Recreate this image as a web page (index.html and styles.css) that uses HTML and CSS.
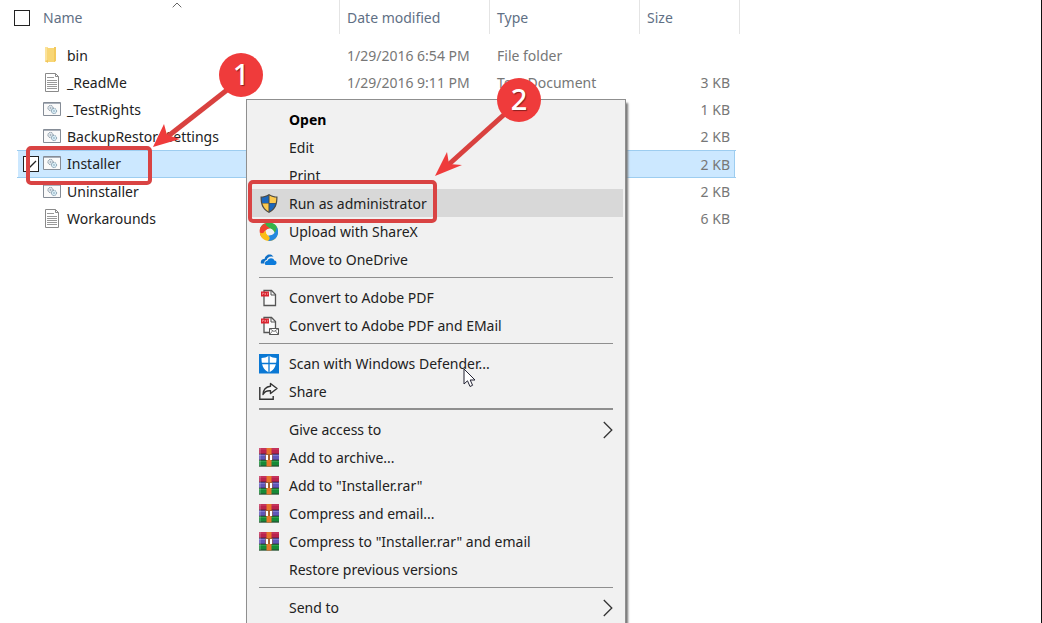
FILE: index.html
```html
<!DOCTYPE html>
<html lang="en">
<head>
<meta charset="utf-8">
<title>File Explorer</title>
<link rel="stylesheet" href="styles.css">
</head>
<body>
<svg class="defs" aria-hidden="true">
  <symbol id="i-folder" viewBox="0 0 18 20"><path d="M2 1h3v15H2z" fill="#fbe29a"/><path d="M4 2h8v14H4z" fill="#f8d675"/><path d="M11 1h2v14l-2 1z" fill="#f3c95c"/><path d="M2 15l3 2v-3z" fill="#f0c55a"/></symbol>
  <symbol id="i-text" viewBox="0 0 18 20"><path d="M2.500.5h10l3 3v15h-13z" fill="#fff" stroke="#8a8a8a"/><path d="M12.500.5v3h3" fill="none" stroke="#8a8a8a"/><path d="M4 4.500h7M4 7.500h10M4 9.500h10M4 11.500h10M4 13.500h10M4 15.500h10" stroke="#999"/></symbol>
  <symbol id="i-bat" viewBox="0 0 18 20"><path d="M.5 2.500h17v13H.5z" fill="#fafafa" stroke="#858c96"/><path d="M1 3.500h16" stroke="#a9b0ba"/><circle cx="7.500" cy="8" r="2.600" fill="#dfe8ef" stroke="#7f8d99" stroke-dasharray="1.400 .7"/><circle cx="11" cy="11" r="2.600" fill="#d9ecf5" stroke="#7d98aa" stroke-dasharray="1.400 .7"/><circle cx="7.500" cy="8" r=".8" fill="#8e9ba6"/><circle cx="11" cy="11" r=".8" fill="#7fa4b8"/></symbol>
  <symbol id="i-uac" viewBox="0 0 20 20"><path d="M10 0C7 2 4 2.500 1.500 2.500c0 8 1.500 13 8.500 16.500 7-3.500 8.500-8.500 8.500-16.500C16 2.500 13 2 10 0z" fill="#4d4a42"/><path d="M9.500 1.500C7 2.900 5 3.500 2.700 3.600c0 2.100.2 4 .6 5.400h6.200z" fill="#1b67bd"/><path d="M10.500 1.500c2.500 1.400 4.500 2 6.800 2.100 0 2.100-.2 4-.6 5.400h-6.200z" fill="#fcc94e"/><path d="M3.400 9.500h6.100v8c-3-1.700-5.100-4.400-6.100-8z" fill="#fcc94e"/><path d="M16.600 9.500h-6.100v8c3-1.700 5.100-4.400 6.100-8z" fill="#1b67bd"/></symbol>
  <symbol id="i-sharex" viewBox="0 0 20 20"><path d="M1 7C2 2 7 0 11 .5c5 .5 8 4 8 9 0 3-1 5-3 6.500.5-4-.5-8-4.500-9.500C8 5 4 5 1 7z" fill="#37b34a"/><path d="M7 1.500C3 2 0 6 .8 10.500 1 13 2 15 4 16c0-5 2-9 7.500-9.500C8 4 6 3.500 7 1.500z" fill="#f0412f"/><path d="M1 10.500C1 15 5 19 10 19c3.500 0 6-1.500 7.500-4-5 1.500-9.500 0-11-6.500C5 11 3 12 1 10.500z" fill="#fbbd16"/><path d="M9 19c6 .5 10.500-4 10-10-.2-1.500-.7-3-1.500-4-.2 5-3 8.500-8.500 8.500 2 1.500 2.500 3.500 0 5.500z" fill="#2588e0"/><circle cx="10.500" cy="10" r="3.300" fill="#f1f1f1"/></symbol>
  <symbol id="i-cloud" viewBox="0 0 20 20"><path d="M2 13.500C1 10 4 8.500 5.500 9 6.500 4 12.500 3 14.500 7c-4-1.500-6.500 1-6.800 3-2 .3-2.700 2-2.200 3.500z" fill="#0f6fc6"/><path d="M6.500 15c-1.500-2 0-4 1.800-4C9 7.500 14.500 7 15.300 10.600c2.700 0 3 3.700.7 4.400z" fill="#0c7bdb"/></symbol>
  <symbol id="i-pdf" viewBox="0 0 20 20"><path d="M5 2.500h7.500l4 4v11H5z" fill="#fafafa" stroke="#555" stroke-width="1.300"/><path d="M12 2.500v4.500h4.500" fill="none" stroke="#555"/><path d="M2 3.500h8v5H2z" fill="#d9232e"/><path d="M3.500 7V5h1v1M6 7V5l1 1-1 1M8.500 7V5h1" fill="none" stroke="#f4a1a5" stroke-width=".6"/></symbol>
  <symbol id="i-pdfmail" viewBox="0 0 20 20"><path d="M5 1.500h7.500l4 4v11H5z" fill="#fafafa" stroke="#555" stroke-width="1.300"/><path d="M12 1.500V6h4.500" fill="none" stroke="#555"/><path d="M2 2.500h8v5H2z" fill="#d9232e"/><path d="M3.500 6V4h1v1M6 6V4l1 1-1 1M8.500 6V4h1" fill="none" stroke="#f4a1a5" stroke-width=".6"/><path d="M10.500 12.500h9v6h-9z" fill="#fff" stroke="#555"/><path d="M10.500 12.500l4.500 3 4.500-3M10.500 18.500l3-3.500M19.500 18.500l-3-3.500" fill="none" stroke="#555" stroke-width=".8"/></symbol>
  <symbol id="i-defender" viewBox="0 0 20 20"><path d="M0 0h20v19.500H0z" fill="#0a78d4"/><path d="M10 1.500C7.500 3.300 5 4 2.500 4c0 7 1.500 11.500 7.500 14.500C16 15.500 17.500 11 17.500 4 15 4 12.500 3.300 10 1.500z" fill="#fff"/><path d="M10 1v18M2 9.500h16" stroke="#0a78d4" stroke-width="1.300"/></symbol>
  <symbol id="i-share" viewBox="0 0 20 20"><path d="M.8 5v12.200h13.400V14" fill="none" stroke="#333" stroke-width="1.400"/><path d="M11.500 1.500l6.500 5-6.500 5V8.800C8 8.500 5.500 9.500 4 12.500c0-4.500 3-8 7.500-8.300z" fill="#f8f8f8" stroke="#333" stroke-width="1.400" stroke-linejoin="round"/></symbol>
  <symbol id="i-rar" viewBox="0 0 20 20"><path d="M0 0h20v6H0z" fill="#b9234e"/><path d="M0 6h20v6H0z" fill="#5f56b8"/><path d="M0 12h20v6.500H0z" fill="#168a37"/><path d="M0 1h20" stroke="#cf4468"/><path d="M0 7.500h20" stroke="#7f78d0"/><path d="M0 13.500h20" stroke="#2fa24b"/><path d="M0 6h20M0 12h20M0 18h20" stroke="#35202e" stroke-width=".7"/><path d="M1 0v18" stroke="#fff" stroke-opacity=".35"/><path d="M7.500 0h5v18.500h-5z" fill="#e8772b"/><path d="M6.500 6h7v6h-7z" fill="#a7602e"/><path d="M7 7h2v5H7zM11 7h2v5h-2z" fill="#fff"/></symbol>
  <symbol id="i-chevron" viewBox="0 0 10 18"><path d="M.8 1l8 8-8 8" fill="none" stroke="#333" stroke-width="1.300"/></symbol>
</svg>

<main class="explorer">
  <table class="files">
    <colgroup><col class="col-name"><col class="col-date"><col class="col-type"><col class="col-size"></colgroup>
    <thead>
      <tr>
        <th class="name-head" aria-sort="ascending"><span class="head-cell"><input class="tick" type="checkbox" aria-label="Select all"><span>Name</span></span>
          <svg class="sort" viewBox="0 0 10 6" aria-hidden="true"><path d="M.7 5.300L5 1l4.300 4.300" fill="none" stroke="#666"/></svg></th>
        <th>Date modified</th><th>Type</th><th>Size</th>
      </tr>
    </thead>
    <tbody>
      <tr><td><span class="file"><svg class="file-icon"><use href="#i-folder"/></svg>bin</span></td><td>1/29/2016 6:54 PM</td><td>File folder</td><td class="size"></td></tr>
      <tr><td><span class="file"><svg class="file-icon"><use href="#i-text"/></svg>_ReadMe</span></td><td>1/29/2016 9:11 PM</td><td>Text Document</td><td class="size">3 KB</td></tr>
      <tr><td><span class="file"><svg class="file-icon"><use href="#i-bat"/></svg>_TestRights</span></td><td></td><td></td><td class="size">1 KB</td></tr>
      <tr><td><span class="file"><svg class="file-icon"><use href="#i-bat"/></svg>BackupRestoreSettings</span></td><td></td><td></td><td class="size">2 KB</td></tr>
      <tr class="selected"><td><label class="file ticked"><input class="tick" type="checkbox" checked><svg class="file-icon"><use href="#i-bat"/></svg>Installer</label></td><td></td><td></td><td class="size">2 KB</td></tr>
      <tr><td><span class="file"><svg class="file-icon"><use href="#i-bat"/></svg>Uninstaller</span></td><td></td><td></td><td class="size">2 KB</td></tr>
      <tr><td><span class="file"><svg class="file-icon"><use href="#i-text"/></svg>Workarounds</span></td><td></td><td></td><td class="size">6 KB</td></tr>
    </tbody>
  </table>

  <div class="menu" role="menu">
    <button class="item default" role="menuitem"><span class="slot"></span>Open</button>
    <button class="item" role="menuitem"><span class="slot"></span>Edit</button>
    <button class="item" role="menuitem"><span class="slot"></span>Print</button>
    <button class="item active" role="menuitem"><svg class="slot"><use href="#i-uac"/></svg>Run as administrator</button>
    <button class="item" role="menuitem"><svg class="slot"><use href="#i-sharex"/></svg>Upload with ShareX</button>
    <button class="item" role="menuitem"><svg class="slot"><use href="#i-cloud"/></svg>Move to OneDrive</button>
    <hr class="rule">
    <button class="item" role="menuitem"><svg class="slot"><use href="#i-pdf"/></svg>Convert to Adobe PDF</button>
    <button class="item" role="menuitem"><svg class="slot"><use href="#i-pdfmail"/></svg>Convert to Adobe PDF and EMail</button>
    <hr class="rule">
    <button class="item" role="menuitem"><svg class="slot"><use href="#i-defender"/></svg>Scan with Windows Defender...</button>
    <button class="item" role="menuitem"><svg class="slot"><use href="#i-share"/></svg>Share</button>
    <hr class="rule thick">
    <button class="item" role="menuitem"><span class="slot"></span>Give access to<svg class="chevron"><use href="#i-chevron"/></svg></button>
    <button class="item" role="menuitem"><svg class="slot"><use href="#i-rar"/></svg>Add to archive...</button>
    <button class="item" role="menuitem"><svg class="slot"><use href="#i-rar"/></svg>Add to "Installer.rar"</button>
    <button class="item" role="menuitem"><svg class="slot"><use href="#i-rar"/></svg>Compress and email...</button>
    <button class="item" role="menuitem"><svg class="slot"><use href="#i-rar"/></svg>Compress to "Installer.rar" and email</button>
    <button class="item" role="menuitem"><span class="slot"></span>Restore previous versions</button>
    <hr class="rule">
    <button class="item" role="menuitem"><span class="slot"></span>Send to<svg class="chevron"><use href="#i-chevron"/></svg></button>
  </div>

  <div class="frame frame-file"></div>
  <div class="frame frame-admin"></div>
  <svg class="arrow arrow-one" viewBox="0 0 80 66" aria-hidden="true"><path d="M76 4L16 51" stroke="#d9413f" stroke-width="5"/><path d="M2 61l11-23 3 11 13 4z" fill="#ef3b3b"/></svg>
  <svg class="arrow arrow-two" viewBox="0 0 80 66" aria-hidden="true"><path d="M74 1L14 55" stroke="#d9413f" stroke-width="5"/><path d="M2 65l12-24 2 12 13 1z" fill="#ef3b3b"/></svg>
  <div class="step step-one">1</div>
  <div class="step step-two">2</div>
  <svg class="cursor" viewBox="0 0 13 20" aria-hidden="true"><path d="M1 1v15l3.500-3.200L7 18.500l2.600-1.200L7.200 12H12z" fill="#fff" stroke="#223" stroke-width="1"/></svg>
</main>
</body>
</html>
```
FILE: styles.css
```css
* { box-sizing: border-box; }

body {
  margin: 0;
  background: #fff;
  color: #222;
  font: 14px/20px "Noto Sans", "Open Sans", sans-serif;
}

.defs { position: absolute; width: 0; height: 0; }

.explorer {
  position: relative;
  height: 100vh;
  overflow: hidden;
  border-right: 1px solid #111;
}

/* File list */
.files {
  width: 740px;
  table-layout: fixed;
  border-collapse: separate;
  border-spacing: 0;
}
.col-name { width: 340px; }
.col-date, .col-type { width: 150px; }

th {
  position: relative;
  height: 34px;
  padding: 2px 7px 0;
  border-right: 1px solid #e4e4e4;
  color: #5f7085;
  font-weight: 400;
  text-align: left;
}
th.name-head { padding-left: 14px; }
.head-cell { display: flex; align-items: center; gap: 13px; }
.sort { position: absolute; top: 2px; left: 172px; width: 10px; height: 6px; }

.files tbody::before { content: ""; display: block; height: 8px; }
td { height: 27px; padding: 1px 7px 0; color: #777; }
td:first-child { padding: 0 0 0 18px; color: #222; }
td.size { padding-right: 10px; text-align: right; }

.file { display: flex; align-items: center; gap: 6px; height: 27px; padding-left: 25px; }
.file.ticked { padding-left: 5px; }
.file.ticked .tick { margin-right: -2px; }
.file-icon { width: 18px; height: 20px; }

/* The highlight stops short of the list's outer edges */
.selected td { height: 28px; border: solid #9dcdf0; border-width: 1px 0; background: #cce8ff; }
.selected .file { height: 26px; }
.selected td:first-child {
  background: linear-gradient(90deg, #fff 18px, #cce8ff 18px);
  border-image: linear-gradient(90deg, #fff 18px, #9dcdf0 18px) 1;
}
.selected td:last-child {
  background: linear-gradient(270deg, #fff 5px, #9dcdf0 5px, #9dcdf0 6px, #cce8ff 6px);
  border-image: linear-gradient(270deg, #fff 5px, #9dcdf0 5px) 1;
}

.tick {
  appearance: none;
  flex: none;
  width: 16px;
  height: 16px;
  margin: 0;
  border: 1px solid #222;
  background: #fff;
}
.tick:checked {
  background: #fff url("data:image/svg+xml,%3Csvg xmlns='http://www.w3.org/2000/svg' viewBox='0 0 14 14'%3E%3Cpath d='M3 7l3 3 6-6' fill='none' stroke='%23222' stroke-width='1.300'/%3E%3C/svg%3E") center / 14px no-repeat;
}

/* Context menu */
.menu {
  position: absolute;
  top: 99px;
  left: 246px;
  width: 380px;
  padding: 5px 2px;
  border: 1px solid #8f8f8f;
  background: #f1f1f1;
  box-shadow: 2px 4px 2px #777;
}
.item {
  display: flex;
  align-items: center;
  gap: 10px;
  width: 100%;
  height: 28px;
  padding: 1px 10px 0;
  border: 0;
  background: none;
  color: #222;
  font: inherit;
  text-align: left;
}
.item.default { color: #000; font-weight: 700; }
.item.active { background: #d8d8d8; }
.slot { flex: none; width: 20px; height: 20px; }
.chevron { width: 10px; height: 18px; margin-left: auto; }
.rule { height: 1px; margin: 4px 10px 5px; border: 0; background: #8f8f8f; }
.rule.thick { height: 2px; margin-top: 3px; }

/* Step annotations */
.frame { position: absolute; border: 4px solid #d94343; border-radius: 5px; }
.frame-file { top: 146px; left: 26px; width: 126px; height: 39px; }
.frame-admin { top: 180px; left: 248px; width: 189px; height: 43px; }
.arrow { position: absolute; width: 80px; height: 66px; }
.arrow-one { top: 86px; left: 151px; }
.arrow-two { top: 111px; left: 433px; }
.step {
  position: absolute;
  width: 44px;
  height: 44px;
  border-radius: 50%;
  background: #ef3b3b;
  color: #fff;
  font: 500 29px/42px "Noto Sans", "Open Sans", sans-serif;
  text-align: center;
  text-shadow: 1px 1px 1px #8a2020;
}
.step-one { top: 53px; left: 219px; }
.step-two { top: 78px; left: 497px; }
.cursor { position: absolute; top: 368px; left: 463px; width: 13px; height: 20px; }
```
